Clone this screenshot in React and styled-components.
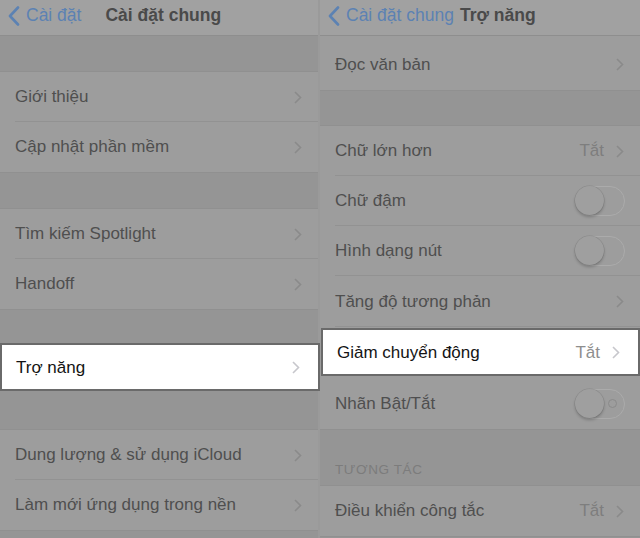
import styled, { createGlobalStyle } from "styled-components";

const GlobalStyle = createGlobalStyle`
  html, body { margin: 0; padding: 0; background: #959595; }
  body { font-family: "Liberation Sans", Arial, sans-serif; }
`;

const Screen = styled.div`
  display: flex;
  width: 640px;
  height: 538px;
  overflow: hidden;
  background: #959595;
`;

const Panel = styled.div`
  display: flex;
  flex-direction: column;
  width: ${(p) => p.$width}px;
  flex-shrink: 0;
  background: #959595;
  border-right: ${(p) => (p.$divider ? "2px solid #9a9a9a" : "none")};
`;

const NavBar = styled.div`
  height: 36px;
  display: flex;
  align-items: center;
  padding: 0 0 4px 8px;
  box-sizing: border-box;
  background: #a1a1a1;
  border-bottom: 1px solid #8e8e8e;
  flex-shrink: 0;
`;

const BackLink = styled.div`
  display: flex;
  align-items: center;
  gap: 6px;
  color: #5c82b3;
  font-size: 17.5px;
`;

const Title = styled.div`
  font-size: 17.5px;
  font-weight: 600;
  color: #4a4a4a;
  margin-left: ${(p) => p.$offset || 0}px;
`;

const Gap = styled.div`
  height: ${(p) => p.$h}px;
  flex-shrink: 0;
  display: flex;
  align-items: flex-end;
  padding: 0 15px ${(p) => p.$pb || 0}px;
  box-sizing: border-box;
`;

const SectionHeader = styled.div`
  font-size: 13.5px;
  color: #7c7c7c;
  letter-spacing: 0.6px;
`;

const Group = styled.div`
  display: flex;
  flex-direction: column;
  background: #9d9d9d;
  border-top: ${(p) => (p.$noTop ? "none" : "1px solid #909090")};
  border-bottom: 1px solid #909090;
  flex-shrink: 0;
`;

const Row = styled.div`
  height: ${(p) => p.$h || 50}px;
  display: flex;
  align-items: center;
  padding: ${(p) => p.$pt || 0}px 16px 0 15px;
  box-sizing: border-box;
  position: relative;
  flex-shrink: 0;
  &:not(:last-child)::after {
    content: "";
    position: absolute;
    left: 15px;
    right: 0;
    bottom: 0;
    height: 1px;
    background: #929292;
  }
`;

const HighlightRow = styled.div`
  height: 48px;
  display: flex;
  align-items: center;
  padding: 1px 18px 0 14px;
  box-sizing: border-box;
  background: #ffffff;
  border: 2px solid #6a6a6a;
  margin: ${(p) => p.$margin || "0"};
  flex-shrink: 0;
`;

const Label = styled.div`
  flex: 1;
  font-size: 17px;
  color: ${(p) => (p.$light ? "#141414" : "#4f4f4f")};
  white-space: nowrap;
`;

const Value = styled.div`
  font-size: 17px;
  color: ${(p) => (p.$light ? "#8e8e8e" : "#7e7e7e")};
  margin-right: 12px;
`;

const Toggle = styled.div`
  width: 50px;
  height: 30px;
  border-radius: 15px;
  border: 1.5px solid #ababab;
  box-sizing: border-box;
  position: relative;
  margin-right: -1px;
  &::before {
    content: "";
    position: absolute;
    left: -1px;
    top: -1px;
    width: 29px;
    height: 29px;
    border-radius: 50%;
    background: #9f9f9f;
    box-shadow: 0 2px 3px rgba(0, 0, 0, 0.22), 0 0 0 0.5px rgba(0, 0, 0, 0.12);
  }
`;

const OffMark = styled.span`
  position: absolute;
  right: 7px;
  top: 9px;
  width: 7px;
  height: 7px;
  border-radius: 50%;
  border: 1.5px solid #8a8a8a;
`;

const Chevron = ({ light }) => (
  <svg width="8" height="13" viewBox="0 0 8 13">
    <path d="M1 1l5.5 5.5L1 12" fill="none" stroke={light ? "#c7c7cc" : "#8a8a8a"} strokeWidth="1.6" />
  </svg>
);

const BackChevron = () => (
  <svg width="12" height="20" viewBox="0 0 12 20">
    <path d="M10 1.5L2 10l8 8.5" fill="none" stroke="#5c82b3" strokeWidth="2.6" strokeLinecap="round" strokeLinejoin="round" />
  </svg>
);

const Item = ({ label, value, toggle, off, h, pt }) => (
  <Row $h={h} $pt={pt}>
    <Label>{label}</Label>
    {value && <Value>{value}</Value>}
    {toggle ? (
      <Toggle>{off && <OffMark />}</Toggle>
    ) : (
      <Chevron />
    )}
  </Row>
);

export default function App() {
  return (
    <>
      <GlobalStyle />
      <Screen>
        <Panel $width={318} $divider>
          <NavBar>
            <BackLink>
              <BackChevron />
              Cài đặt
            </BackLink>
            <Title $offset={24}>Cài đặt chung</Title>
          </NavBar>
          <Gap $h={35} />
          <Group>
            <Item label="Giới thiệu" />
            <Item label="Cập nhật phần mềm" />
          </Group>
          <Gap $h={35} />
          <Group>
            <Item label="Tìm kiếm Spotlight" />
            <Item label="Handoff" />
          </Group>
          <Gap $h={33} />
          <HighlightRow $margin="0 -2px 0 0">
            <Label $light>Trợ năng</Label>
            <Chevron light />
          </HighlightRow>
          <Gap $h={38} />
          <Group>
            <Item label="Dung lượng & sử dụng iCloud" />
            <Item label="Làm mới ứng dụng trong nền" />
          </Group>
        </Panel>
        <Panel $width={320}>
          <NavBar>
            <BackLink>
              <BackChevron />
              Cài đặt chung
            </BackLink>
            <Title $offset={6}>Trợ năng</Title>
          </NavBar>
          <Group $noTop>
            <Item label="Đọc văn bản" h={54} pt={3} />
          </Group>
          <Gap $h={34} />
          <Group>
            <Item label="Chữ lớn hơn" value="Tắt" />
            <Item label="Chữ đậm" toggle />
            <Item label="Hình dạng nút" toggle />
            <Row $h={51}>
              <Label>Tăng độ tương phản</Label>
              <Chevron />
            </Row>
            <HighlightRow $margin="1px 0 3px 1px">
              <Label $light>Giảm chuyển động</Label>
              <Value $light>Tắt</Value>
              <Chevron light />
            </HighlightRow>
            <Item label="Nhãn Bật/Tắt" toggle off />
          </Group>
          <Gap $h={55} $pb={8}>
            <SectionHeader>TƯƠNG TÁC</SectionHeader>
          </Gap>
          <Group>
            <Item label="Điều khiển công tắc" value="Tắt" />
          </Group>
        </Panel>
      </Screen>
    </>
  );
}
